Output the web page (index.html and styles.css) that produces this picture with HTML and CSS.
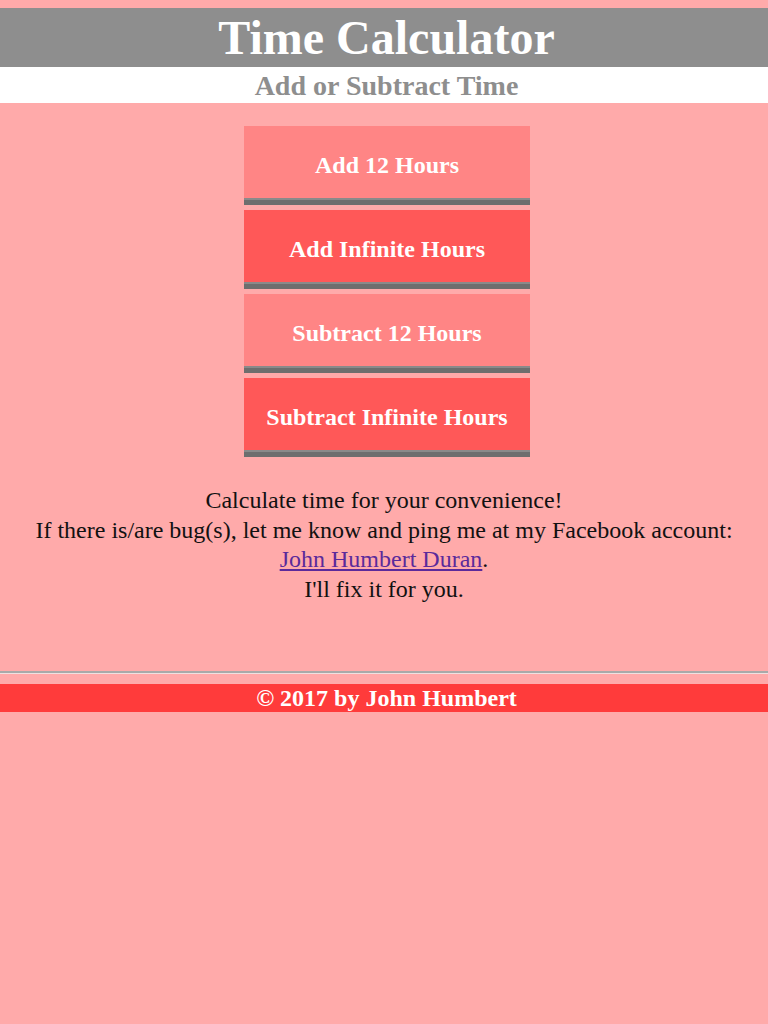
FILE: index.html
```html
<!DOCTYPE html>
<html>
<head>
<meta charset="utf-8">
<title>Time Calculator</title>
<link rel="stylesheet" href="styles.css">
</head>
<body>
<header class="top">
  <h1 class="title">Time Calculator</h1>
  <h2 class="subtitle">Add or Subtract Time</h2>
</header>
<main class="main">
  <div class="buttons">
    <button class="btn btn-light">Add 12 Hours</button>
    <button class="btn btn-dark">Add Infinite Hours</button>
    <button class="btn btn-light">Subtract 12 Hours</button>
    <button class="btn btn-dark">Subtract Infinite Hours</button>
  </div>
  <p class="note">Calculate time for your convenience!<br>If there is/are bug(s), let me know and ping me at my Facebook account:<br><a class="link" href="#">John Humbert Duran</a>.<br>I'll fix it for you.</p>
</main>
<hr class="rule">
<footer class="footer">© 2017 by John Humbert</footer>
</body>
</html>
```
FILE: styles.css
```css
html, body {
  margin: 0;
  padding: 0;
}
body {
  background: #ffaaaa;
  font-family: "Liberation Serif", "Times New Roman", serif;
  padding-top: 8px;
}
.top {
  text-align: center;
}
.title {
  margin: 0;
  padding-left: 5px;
  background: #8e8e8e;
  color: #ffffff;
  font-size: 48px;
  font-weight: bold;
  height: 59px;
  line-height: 60px;
}
.subtitle {
  margin: 0;
  padding-left: 5px;
  background: #ffffff;
  color: #8e8e8e;
  font-size: 28px;
  font-weight: bold;
  height: 36px;
  line-height: 38px;
}
.main {
  padding-top: 23px;
}
.buttons {
  display: flex;
  flex-direction: column;
  align-items: center;
  gap: 5px;
  padding-left: 6px;
}
.btn {
  width: 286px;
  height: 79px;
  border: none;
  border-bottom: 5px solid #6e6e6e;
  box-shadow: inset 0 -3px 0 -1px #8a8a8a;
  color: #ffffff;
  font-family: "Liberation Serif", "Times New Roman", serif;
  font-weight: bold;
  font-size: 24px;
  padding: 5px 0 0;
}
.btn-light {
  background: #ff8585;
}
.btn-dark {
  background: #ff5858;
}
.note {
  margin: 29px 0 0;
  text-align: center;
  color: #111;
  font-size: 24px;
  line-height: 29.5px;
}
.link {
  color: #5b2a9b;
}
.rule {
  margin: 67px 0 0;
  border: none;
  border-top: 2px solid #a9a9a9;
  border-bottom: 1px solid #f0e0e0;
  height: 0;
}
.footer {
  margin-top: 10px;
  padding-left: 5px;
  background: #ff3b3b;
  color: #ffffff;
  font-weight: bold;
  font-size: 24px;
  text-align: center;
  height: 28px;
  line-height: 29px;
}
```
